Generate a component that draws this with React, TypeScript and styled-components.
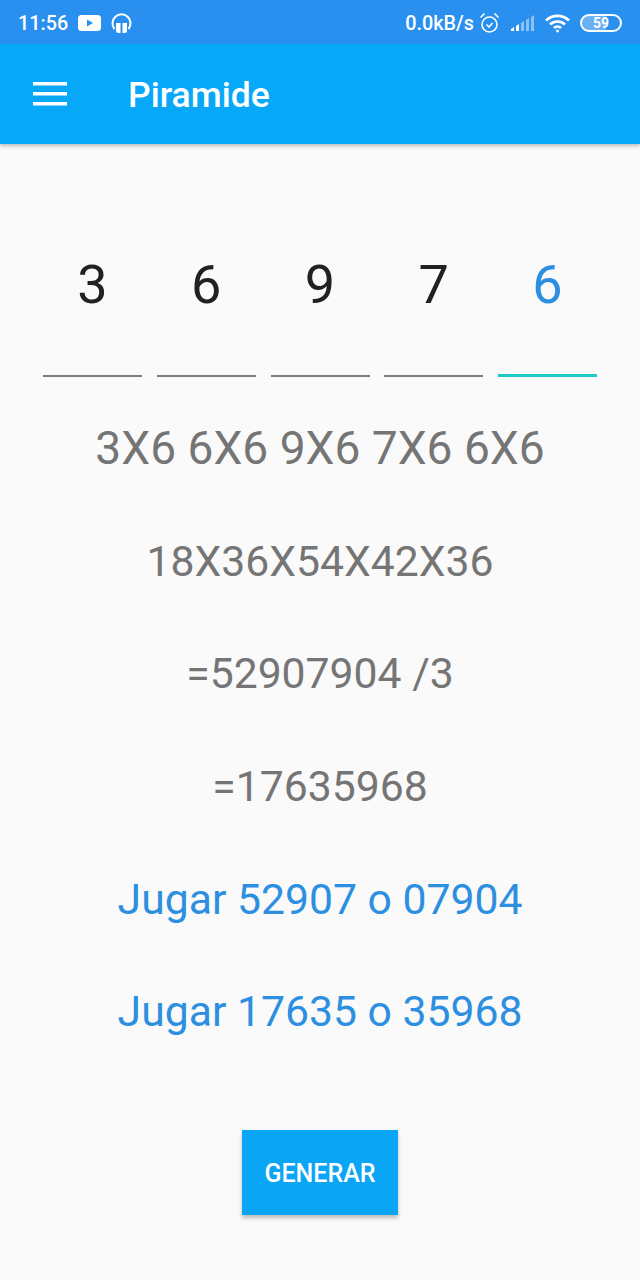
import React from "react";
import styled, { createGlobalStyle } from "styled-components";

const Global = createGlobalStyle`
  html, body { margin: 0; padding: 0; background: #fafafa; }
  * { box-sizing: border-box; }
  body { font-family: Roboto, "Liberation Sans", sans-serif; }
`;
const Page = styled.div`width: 640px; height: 1280px; display: flex; flex-direction: column; background: #fafafa; overflow: hidden;`;
const Header = styled.header`background: #08a8f8; box-shadow: 0 2px 4px rgba(0,0,0,.25); color: #fff; height: 144px; display: flex; flex-direction: column;`;
const StatusBar = styled.div`height: 44px; background: #2a90f0; display: flex; align-items: center; justify-content: space-between; padding: 2px 18px 0; font-size: 19.8px; font-weight: 500;`;
const Group = styled.div`display: flex; align-items: center; gap: 10px;`;
const Speed = styled.span`margin-right: -5px;`;
const Battery = styled.span`width: 42px; height: 18px; border: 2px solid #fff; border-radius: 9px; font-size: 14px; font-weight: 700; line-height: 14px; text-align: center; background: linear-gradient(90deg, rgba(255,255,255,.3) 62%, transparent 62%);`;
const Toolbar = styled.div`height: 100px; display: flex; align-items: center; padding-left: 33px; gap: 61px;`;
const Title = styled.h1`margin: 4px 0 0; font-size: 35.5px; font-weight: 500; line-height: 1;`;
const Main = styled.main`flex: 1; display: flex; flex-direction: column; align-items: center; padding-top: 104px;`;
const Digits = styled.div`display: flex; gap: 14.75px; margin: 0 0 15px 0;`;
const Digit = styled.div<{ $active?: boolean }>`width: 99px; height: 129px; border-bottom: ${p => p.$active ? "3px solid #1ccbc6" : "2px solid #7d7d7d"}; color: ${p => p.$active ? "#2d8fe0" : "#212121"}; font-size: 54px; text-align: center; line-height: 74px;`;
const Line = styled.div<{ $blue?: boolean; $size?: number }>`height: 112.7px; line-height: 113px; font-size: ${p => p.$size ?? 42.7}px; color: ${p => p.$blue ? "#2d8fe0" : "#757575"}; white-space: nowrap;`;
const Button = styled.button`margin-top: 62px; width: 156px; height: 85px; border: 0; padding: 2px 0 0; background: #0aa5f5; color: #fff; font: 500 25px Roboto, sans-serif; box-shadow: 0 3px 4px rgba(0,0,0,.25);`;

export default function App() {
  return <Page><Global/>
    <Header>
      <StatusBar>
        <Group><span>11:56</span>
          <svg width="23" height="16" viewBox="0 0 23 16"><rect width="23" height="16" rx="3.500" fill="#fff"/><path d="M9 4.500v7l6-3.500z" fill="#2a90f0"/></svg>
          <svg width="21" height="23" viewBox="0 0 21 23" fill="none" stroke="#fff" strokeWidth="2"><path d="M3.500 17A9 9 0 1 1 17.500 17"/><path d="M5 11h4.500v10H7.500A2.500 2.500 0 0 1 5 18.500zM16 11h-4.500v10h2A2.500 2.500 0 0 0 16 18.500z" fill="#fff" stroke="none"/></svg>
        </Group>
        <Group><Speed>0.0kB/s</Speed>
          <svg width="21" height="22" viewBox="0 0 21 22" fill="none" stroke="#fff" strokeWidth="1.6"><circle cx="10.500" cy="12.500" r="7.500"/><path d="M7.500 12.500l2.500 2.500 3.500-4M1.500 5.500l4-4M19.500 5.500l-4-4"/></svg>
          <svg width="25" height="18" viewBox="0 0 25 18" fill="#fff"><path d="M1 17v-2l3-2v4zM6 17v-5l3-2v7z"/><path d="M11 17V9l3-2v10zM16 17V6l3-2v13zM21 17V3l3-2v16z" opacity=".45"/></svg>
          <svg width="25" height="19" viewBox="0 0 25 19" fill="none" stroke="#fff" strokeWidth="2.600"><path d="M1 6.500a16.500 16.500 0 0 1 23 0M5 10.500a11 11 0 0 1 15 0M9 14a5 5 0 0 1 7 0"/><circle cx="12.500" cy="17" r="1.200" fill="#fff" strokeWidth="0.500"/></svg>
          <Battery>59</Battery>
        </Group>
      </StatusBar>
      <Toolbar>
        <svg width="34" height="24" viewBox="0 0 34 24" fill="#fff"><rect width="34" height="3.500"/><rect y="10" width="34" height="3.500"/><rect y="20" width="34" height="3.500"/></svg>
        <Title>Piramide</Title>
      </Toolbar>
    </Header>
    <Main>
      <Digits>
        <Digit>3</Digit><Digit>6</Digit><Digit>9</Digit><Digit>7</Digit><Digit $active>6</Digit>
      </Digits>
      <Line $size={46.1}>3X6 6X6 9X6 7X6 6X6</Line>
      <Line>18X36X54X42X36</Line>
      <Line>=52907904 /3</Line>
      <Line>=17635968</Line>
      <Line $blue>Jugar 52907 o 07904</Line>
      <Line $blue>Jugar 17635 o 35968</Line>
      <Button>GENERAR</Button>
    </Main>
  </Page>;
}
